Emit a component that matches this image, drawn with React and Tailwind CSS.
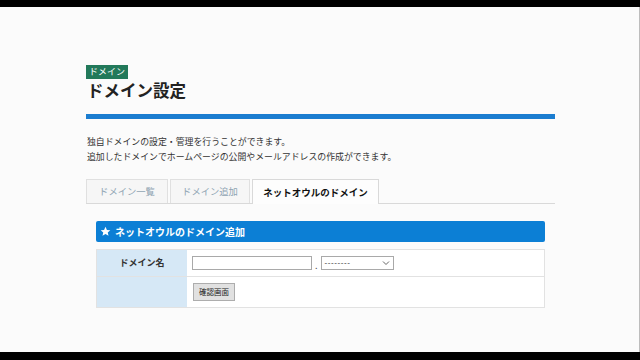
export default function App() {
  const font = { fontFamily: '"Noto Sans CJK JP", "Noto Sans", sans-serif' };

  return (
    <div className="w-[640px] h-[360px] flex flex-col bg-black overflow-hidden" style={font}>
      <div className="h-[7px] shrink-0" />
      <main className="flex-1 bg-[#fbfbfb] border-r border-[#bdbdbd] pl-[86px] pt-[58px]">
        <div className="w-[469px]">
          {/* Page heading */}
          <div className="w-fit bg-[#22795a] text-white text-[9px] leading-[14px] px-[3px]">ドメイン</div>
          <h1 className="text-[16.5px] font-bold text-[#222] leading-[22px] ml-[1px]">ドメイン設定</h1>
          <div className="h-[5px] bg-[#1b7dd0] mt-[13px]" />

          <div className="mt-[15px] text-[8.9px] leading-[15px] text-[#333] ml-[1px]">
            <p>独自ドメインの設定・管理を行うことができます。</p>
            <p>追加したドメインでホームページの公開やメールアドレスの作成ができます。</p>
          </div>

          {/* Tabs */}
          <div className="mt-[15px] flex items-end gap-[2px] border-b border-[#d9d9d9] h-[25px]">
            <div className="w-[82px] h-[24px] border border-b-0 border-[#e0e0e0] bg-[#f6f6f6] text-[#8ea3b2] text-[9.3px] flex items-center justify-center">ドメイン一覧</div>
            <div className="w-[80px] h-[24px] border border-b-0 border-[#e0e0e0] bg-[#f6f6f6] text-[#8ea3b2] text-[9.3px] flex items-center justify-center">ドメイン追加</div>
            <div className="w-[127px] h-[25px] -mb-px border border-b-0 border-[#d9d9d9] bg-[#fdfdfd] text-[#111] font-bold text-[9.5px] flex items-center justify-center">ネットオウルのドメイン</div>
          </div>

          {/* Form panel */}
          <div className="ml-[10px] w-[449px] mt-[17px]">
            <div className="h-[21px] bg-[#0c7fd5] rounded-[2px] flex items-center pl-[4px] gap-[4px] text-white">
              <svg width="11" height="11" viewBox="0 0 24 24" fill="white">
                <path d="M12 1.5l3.1 7 7.4.6-5.6 4.9 1.7 7.4L12 17.5l-6.6 3.9 1.7-7.4L1.5 9.1l7.4-.6z" />
              </svg>
              <span className="text-[10px] font-bold">ネットオウルのドメイン追加</span>
            </div>

            <div className="mt-[7px] border border-[#e2e2e2] bg-white">
              <div className="flex h-[27px] border-b border-[#e2e2e2]">
                <div className="w-[90px] bg-[#d6e8f6] flex items-center justify-center text-[9px] font-bold text-[#333]">ドメイン名</div>
                <div className="flex-1 flex items-center pl-[5px]">
                  <div className="w-[120px] h-[14px] border border-[#a9a9a9] bg-white" />
                  <span className="text-[9px] leading-none text-[#555] mx-[3px] mt-[4px]">.</span>
                  <div className="w-[73px] h-[14px] border border-[#a9a9a9] bg-white flex items-center justify-between px-[3px]">
                    <span className="text-[8px] leading-none text-[#333] tracking-[0.6px]" style={{ fontFamily: '"Liberation Sans", sans-serif' }}>--------</span>
                    <svg width="8" height="6" viewBox="0 0 8 6" fill="none" stroke="#666" strokeWidth="1">
                      <path d="M1 1.5l3 3 3-3" />
                    </svg>
                  </div>
                </div>
              </div>
              <div className="flex h-[30px]">
                <div className="w-[90px] bg-[#d6e8f6]" />
                <div className="flex-1 flex items-center pl-[6px]">
                  <button className="w-[42px] h-[18px] bg-[#e1e1e1] border border-[#adadad] text-[7.5px] text-[#222] flex items-center justify-center">確認画面</button>
                </div>
              </div>
            </div>
          </div>
        </div>
      </main>
      <div className="h-[8px] shrink-0" />
    </div>
  );
}
